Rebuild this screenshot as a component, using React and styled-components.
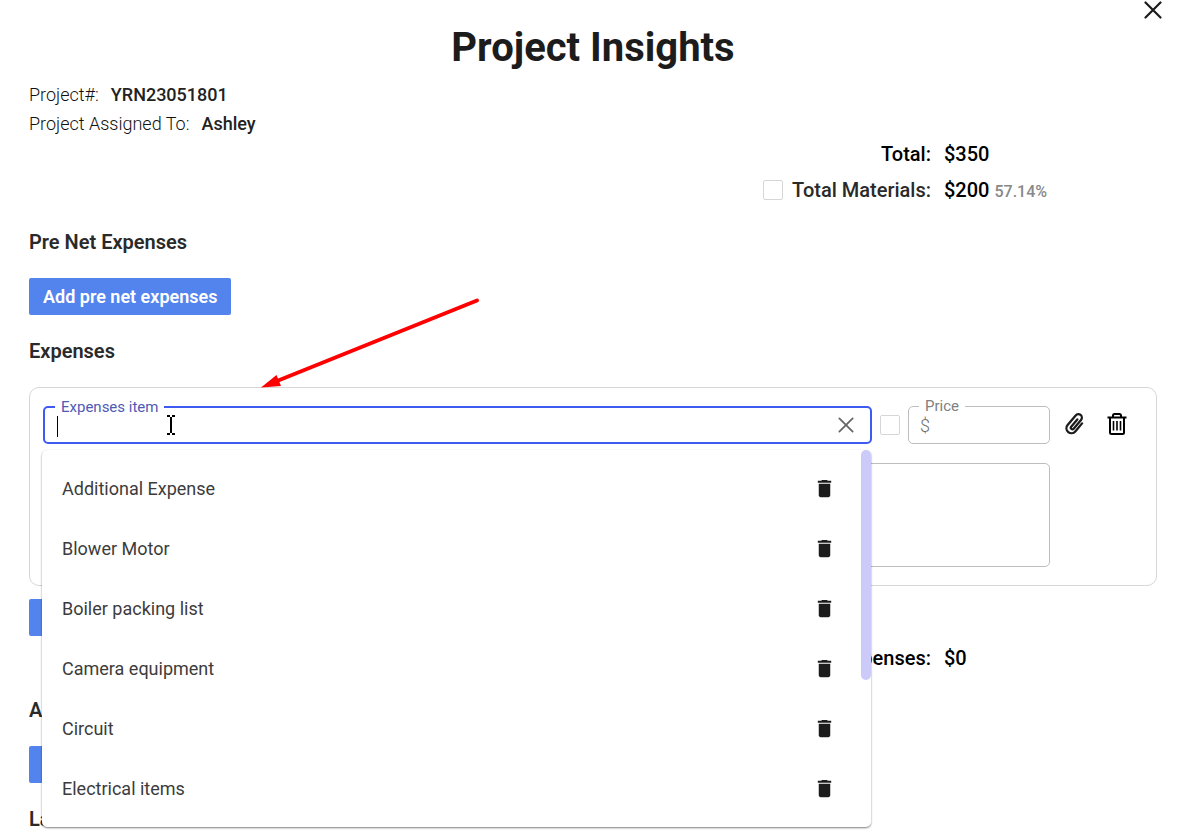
import React, { useState } from "react";
import styled, { createGlobalStyle } from "styled-components";
import { MdDelete } from "react-icons/md";

const GlobalStyle = createGlobalStyle`
  * {
    box-sizing: border-box;
  }
  body {
    margin: 0;
    background: #fff;
    color: #222;
    font-family: Roboto, "Liberation Sans", sans-serif;
  }
`;

const Dialog = styled.main`
  position: relative;
  padding: 24px 29px;
`;

const IconButton = styled.button`
  display: flex;
  padding: 0;
  border: 0;
  background: none;
  color: ${props => props.color || "#1c1c1c"};
  cursor: pointer;
`;

const CloseButton = styled(IconButton)`
  position: absolute;
  top: 1px;
  right: 24px;
`;

const Title = styled.h1`
  margin: 0 0 9px;
  font-size: 40px;
  line-height: 47px;
  font-weight: 700;
  text-align: center;
  color: #1c1c1c;
`;

const Info = styled.p`
  display: flex;
  gap: 12px;
  margin: 0;
  font-size: 18px;
  line-height: 29px;
  font-weight: 300;
  color: #111;
`;

const InfoValue = styled.span`
  font-weight: 500;
  color: #222;
`;

const Totals = styled.div`
  margin-top: ${props => props.$top}px;
`;

const TotalRow = styled.div`
  display: grid;
  grid-template-columns: 1fr 213px;
  gap: 13px;
  align-items: center;
  height: 36px;
  font-size: 20px;
  line-height: 36px;
  font-weight: 500;
  color: #000;
`;

const TotalLabel = styled.label`
  display: flex;
  justify-content: flex-end;
  align-items: center;
  gap: 9px;
  color: ${props => (props.$soft ? "#2a2a2a" : "#000")};
`;

const Percent = styled.span`
  margin-left: 5px;
  font-size: 16px;
  line-height: 20px;
  color: #888;
`;

const Checkbox = styled.input`
  appearance: none;
  flex: none;
  width: 20px;
  height: 20px;
  margin: 0;
  border: 1px solid #d6d6d6;
  border-radius: 2px;
  background: #fff;
`;

const Heading = styled.h2`
  margin: 0;
  font-size: 20px;
  line-height: 24px;
  font-weight: 600;
  color: #2a2a2a;
`;

const Section = styled.section`
  display: flex;
  flex-direction: column;
  align-items: flex-start;
  gap: 24px;
  margin-top: ${props => props.$top || 24}px;
`;

const AddButton = styled.button`
  height: 37px;
  padding: 0 14px;
  border: 0;
  border-radius: 2px;
  background: #5384ee;
  color: #fff;
  font-family: inherit;
  font-size: 18px;
  font-weight: 600;
  cursor: pointer;
`;

const Card = styled.div`
  display: flex;
  align-self: stretch;
  gap: 15px;
  padding: 18px 13px;
  border: 1px solid #d6d6d6;
  border-radius: 10px;
`;

const Fields = styled.div`
  display: flex;
  flex: 1;
  flex-direction: column;
  gap: 19px;
`;

const FieldRow = styled.div`
  display: flex;
  align-items: center;
  gap: 8px;
`;

const Field = styled.div`
  position: relative;
  display: flex;
  align-items: center;
  height: 38px;
  border: ${props => (props.$active ? "2px solid #3d5af1" : "1px solid #bdbdbd")};
  border-radius: 5px;
  padding: 0 16px 0 11px;
  ${props => (props.$width ? `flex: none; width: ${props.$width}px;` : "flex: 1;")}
`;

const FieldLabel = styled.label`
  position: absolute;
  top: -10px;
  left: 10px;
  padding: 0 6px;
  background: #fff;
  font-size: 15px;
  line-height: 18px;
  font-weight: 400;
  color: ${props => (props.$active ? "#4f5ab5" : "#808080")};
`;

const TextInput = styled.input`
  flex: 1;
  min-width: 0;
  border: 0;
  outline: 0;
  padding: 0;
  background: none;
  font-family: inherit;
  font-size: 18px;
  font-weight: 300;

  &::placeholder {
    color: #707070;
    opacity: 1;
  }
`;

const Caret = styled.span`
  width: 1px;
  height: 24px;
  margin-left: 1px;
  background: #000;
`;

const Notes = styled.textarea`
  display: block;
  width: 100%;
  height: 104px;
  border: 1px solid #bdbdbd;
  border-radius: 5px;
  resize: none;
`;

const Actions = styled.div`
  display: flex;
  align-items: center;
  gap: 22px;
  height: 36px;
  padding-right: 16px;
`;

const Menu = styled.ul`
  position: absolute;
  z-index: 2;
  top: 42px;
  left: -3px;
  right: -1px;
  margin: 0;
  padding: 8px 35px 9px 20px;
  list-style: none;
  background: #fff;
  border-radius: 5px;
  box-shadow: 0 1px 2px rgba(0, 0, 0, 0.5);
`;

const MenuItem = styled.li`
  display: flex;
  justify-content: space-between;
  align-items: center;
  height: 60px;
  font-size: 18px;
  font-weight: 400;
  color: #3c3c3c;
`;

const ScrollThumb = styled.li`
  position: absolute;
  top: 0;
  right: 0;
  width: 10px;
  height: 230px;
  border-radius: 5px;
  background: #cbcaf8;
`;

const Overlay = styled.svg`
  position: absolute;
  z-index: 3;
  pointer-events: none;
`;

const Arrow = styled(Overlay)`
  top: 296px;
  left: 260px;
`;

const Pointer = styled(Overlay)`
  top: 6px;
  left: 121px;
`;

const items = [
  "Additional Expense",
  "Blower Motor",
  "Boiler packing list",
  "Camera equipment",
  "Circuit",
  "Electrical items",
];

function Cross({ size, width }) {
  return (
    <svg width={size} height={size} viewBox="0 0 18 18" fill="none" stroke="currentColor" strokeWidth={width}>
      <path d="M1.5 1.5l15 15M16.5 1.5l-15 15" strokeLinecap="round" />
    </svg>
  );
}

function ClipIcon() {
  return (
    <svg width="20" height="22" viewBox="0 0 20 22" fill="none" stroke="currentColor" strokeWidth="2.3">
      <g transform="translate(10 11) rotate(40)" strokeLinecap="round">
        <path d="M5 -5V5.500a5 5 0 0 1 -10 0V-7a3.500 3.500 0 0 1 7 0V4.500a1.600 1.600 0 0 1 -3.200 0V-5" />
      </g>
    </svg>
  );
}

function TrashIcon() {
  return (
    <svg width="20" height="22" viewBox="0 0 20 22" fill="none" stroke="#000" strokeWidth="2">
      <path d="M0.500 4.500h19M6 4V2.600Q6 1 7.600 1h4.800Q14 1 14 2.600V4" />
      <path d="M3 5v14.500Q3 21 4.500 21h11q1.500 0 1.500-1.500V5" />
      <path d="M6.500 8v9.500M10 8v9.500M13.500 8v9.500" strokeWidth="1.600" />
    </svg>
  );
}

function ExpensePicker() {
  const [value, setValue] = useState("");

  return (
    <Field $active>
      <FieldLabel htmlFor="item" $active>Expenses item</FieldLabel>
      <Caret />
      <TextInput id="item" value={value} onChange={e => setValue(e.target.value)} />
      <IconButton color="#666" aria-label="Clear" onClick={() => setValue("")}>
        <Cross size={16} width={2} />
      </IconButton>
      <Pointer width="10" height="22" viewBox="0 0 10 22" fill="none" stroke="#000" strokeWidth="2">
        <path d="M1 2h3M6 2h3M5 3v16M1 20h3M6 20h3" />
      </Pointer>
      <Menu>
        {items.map(item => (
          <MenuItem key={item}>
            {item}
            <IconButton aria-label={`Delete ${item}`}>
              <MdDelete size={23} />
            </IconButton>
          </MenuItem>
        ))}
        <ScrollThumb aria-hidden="true" />
      </Menu>
    </Field>
  );
}

function App() {
  return (
    <Dialog>
      <GlobalStyle />
      <CloseButton aria-label="Close">
        <Cross size={18} width={2.2} />
      </CloseButton>
      <Title>Project Insights</Title>
      <Info>Project#: <InfoValue>YRN23051801</InfoValue></Info>
      <Info>Project Assigned To: <InfoValue>Ashley</InfoValue></Info>

      <Totals $top={-2}>
        <TotalRow>
          <TotalLabel as="span">Total:</TotalLabel>
          <span>$350</span>
        </TotalRow>
        <TotalRow>
          <TotalLabel $soft>
            <Checkbox type="checkbox" />
            Total Materials:
          </TotalLabel>
          <span>$200<Percent>57.14%</Percent></span>
        </TotalRow>
      </Totals>

      <Section $top={22}>
        <Heading>Pre Net Expenses</Heading>
        <AddButton>Add pre net expenses</AddButton>
      </Section>

      <Section>
        <Heading>Expenses</Heading>
        <Card>
          <Fields>
            <FieldRow>
              <ExpensePicker />
              <Checkbox type="checkbox" aria-label="Material" />
              <Field $width={142}>
                <FieldLabel htmlFor="price">Price</FieldLabel>
                <TextInput id="price" placeholder="$" />
              </Field>
            </FieldRow>
            <Notes aria-label="Notes" />
          </Fields>
          <Actions>
            <IconButton aria-label="Attach"><ClipIcon /></IconButton>
            <IconButton aria-label="Remove"><TrashIcon /></IconButton>
          </Actions>
        </Card>
      </Section>
      <Section $top={13}>
        <AddButton>Add expenses</AddButton>
      </Section>
      <Totals $top={4}>
        <TotalRow>
          <TotalLabel as="span">Total Expenses:</TotalLabel>
          <span>$0</span>
        </TotalRow>
      </Totals>

      <Section $top={22}>
        <Heading>Additional</Heading>
        <AddButton>Add additional</AddButton>
      </Section>
      <Section>
        <Heading>Labor</Heading>
      </Section>

      <Arrow width="222" height="94" viewBox="260 296 222 94">
        <path d="M477 300.500L277 381" stroke="#f00" strokeWidth="4" strokeLinecap="round" />
        <path d="M261 387.500L276.500 375L281 386z" fill="#f00" />
      </Arrow>
    </Dialog>
  );
}

export default App;
